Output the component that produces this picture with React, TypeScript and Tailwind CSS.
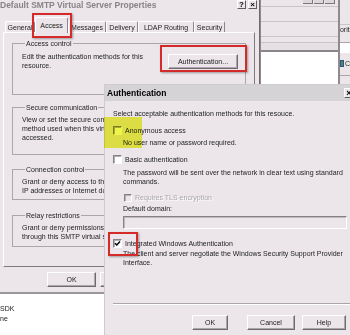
import React from 'react';

const Btn = ({ label, className = '' }: { label: string; className?: string }) => (
  <div
    className={`flex items-center justify-center h-[15px] border border-t-white border-l-white border-r-[#6f6b6f] border-b-[#6f6b6f] shadow-[inset_-1px_-1px_0_#aaa6aa] text-[7px] leading-none ${className}`}
  >
    {label}
  </div>
);

const TitleBtn = ({ children }: { children: React.ReactNode }) => (
  <div className="w-[9px] h-[9px] flex items-center justify-center border border-t-white border-l-white border-r-[#5f5b5f] border-b-[#5f5b5f] bg-[#ece6eb] text-[8px] font-bold leading-none text-black">
    {children}
  </div>
);

const Box = ({ checked = false, small = false, disabled = false }: { checked?: boolean; small?: boolean; disabled?: boolean }) => (
  <span
    className={`${small ? 'w-[8px] h-[8px]' : 'w-[9px] h-[9px]'} shrink-0 flex items-center justify-center border border-t-[#858185] border-l-[#858185] border-r-white border-b-white shadow-[inset_1px_1px_0_#b3afb3] ${disabled ? 'bg-[#ece6eb]' : 'bg-white'}`}
  >
    {checked && (
      <svg viewBox="0 0 7 7" className="w-[7px] h-[7px]">
        <path d="M1 3.2 L2.8 5 L6 1.5" stroke="#000" strokeWidth="1.5" fill="none" />
      </svg>
    )}
  </span>
);

const Group = ({ label, className = '', children }: { label: string; className?: string; children: React.ReactNode }) => (
  <fieldset className={`border border-[#aaa6aa] pl-[9px] ${className}`}>
    <legend className="ml-[3px] px-[1px] text-[7px] leading-[9px]">{label}</legend>
    {children}
  </fieldset>
);

const tabs = [
  { name: 'General', w: 'w-[30px]' },
  { name: 'Access', w: 'w-[33px]', active: true },
  { name: 'Messages', w: 'w-[38px]' },
  { name: 'Delivery', w: 'w-[32px]' },
  { name: 'LDAP Routing', w: 'w-[56px]' },
  { name: 'Security', w: 'w-[31px]' },
];

function SmtpDialog() {
  return (
    <div className="absolute left-[-3px] top-0 w-[263px] h-[294px] flex flex-col bg-[#ece6eb] border-r border-b-2 border-r-[#6d696d] border-b-[#9a969a]">
      <div className="h-[15px] flex items-start justify-between pl-[3px] pr-[2px]">
        <span className="text-[8.5px] leading-[10px] font-bold text-[#878387] whitespace-nowrap">
          Default SMTP Virtual Server Properties
        </span>
        <div className="flex gap-[2px]">
          <TitleBtn>?</TitleBtn>
          <TitleBtn>×</TitleBtn>
        </div>
      </div>

      <div className="mt-[2px] ml-[6px] pl-[2px] h-[16px] flex items-end">
        {tabs.map(t => (
          <div
            key={t.name}
            className={`${t.w} flex items-center justify-center text-[7px] leading-none whitespace-nowrap border-t border-l border-t-white border-l-white border-r border-r-[#8a868a] rounded-t-[2px] ${
              t.active ? 'relative z-10 h-[16px] bg-[#ece6eb]' : 'h-[12px]'
            }`}
          >
            {t.name}
          </div>
        ))}
      </div>

      <div className="ml-[6px] -mt-[1px] w-[252px] h-[235px] flex flex-col pt-[6px] pl-[8px] border border-t-white border-l-white border-r-[#7d797d] border-b-[#7d797d]">
        <Group label="Access control" className="w-[234px] h-[56px]">
          <div className="flex justify-between pr-[7px] pt-[4px]">
            <div className="text-[7px] leading-[9px] whitespace-nowrap">
              <div>Edit the authentication methods for this</div>
              <div>resource.</div>
            </div>
            <Btn label="Authentication..." className="w-[70px] mt-[2px]" />
          </div>
        </Group>
        <Group label="Secure communication" className="w-[234px] h-[52px] mt-[8px]">
          <div className="pt-[3px] text-[7px] leading-[9px] whitespace-nowrap">
            <div>View or set the secure communications</div>
            <div>method used when this virtual server is</div>
            <div>accessed.</div>
          </div>
        </Group>
        <Group label="Connection control" className="w-[234px] h-[35px] mt-[10px]">
          <div className="pt-[3px] text-[7px] leading-[9px] whitespace-nowrap">
            <div>Grant or deny access to this resource using</div>
            <div>IP addresses or Internet domain names.</div>
          </div>
        </Group>
        <Group label="Relay restrictions" className="w-[234px] h-[36px] mt-[11px]">
          <div className="pt-[3px] text-[7px] leading-[9px] whitespace-nowrap">
            <div>Grant or deny permissions to relay e-mail</div>
            <div>through this SMTP virtual server.</div>
          </div>
        </Group>
      </div>

      <div className="ml-[6px] mt-[5px] w-[252px] flex justify-end gap-[4px]">
        <Btn label="OK" className="w-[49px]" />
        <Btn label="Cancel" className="w-[49px]" />
        <Btn label="Apply" className="w-[49px]" />
        <Btn label="Help" className="w-[49px]" />
      </div>
    </div>
  );
}

function BackWindow() {
  return (
    <div className="absolute left-[260px] top-0 w-[90px] h-[84px] flex bg-[#ece6eb] border-l border-l-[#8e8a8e]">
      <div className="w-[77px] flex flex-col">
        <div className="h-[7px] flex justify-end gap-[1px] pr-[3px] border-b border-b-[#c8c4c8]">
          <div className="w-[10px] h-[4px] border-r border-b border-[#7a767a] bg-[#dcd8dc]" />
          <div className="w-[10px] h-[4px] border-r border-b border-[#7a767a] bg-[#dcd8dc]" />
          <div className="w-[10px] h-[4px] border-r border-b border-[#7a767a] bg-[#dcd8dc]" />
        </div>
        <div className="h-[15px] border-b border-b-[#c8c4c8]" />
        <div className="h-[15px] border-b border-b-[#c8c4c8]" />
        <div className="h-[5px]" />
        <div className="h-[10px] border-t border-t-[#c8c4c8] border-b-2 border-b-[#8a868a] bg-[#e6e0e5]" />
        <div className="flex-1 bg-white" />
      </div>
      <div className="flex-1 flex flex-col border-l-2 border-l-[#8e8a8e]">
        <div className="h-[25px] border-b border-b-[#c8c4c8]" />
        <div className="text-[7px] leading-[9px] whitespace-nowrap">orit</div>
        <div className="mt-[8px] h-[11px] bg-white border-t border-t-[#a9a5a9]" />
        <div className="mt-[6px] h-[9px] flex items-center gap-[1px]">
          <span className="w-[4px] h-[7px] bg-[#4f8a5c] border border-[#2d4f8a]" />
          <span className="text-[7px] leading-none">C</span>
        </div>
        <div className="mt-[7px] border-b border-b-[#a9a5a9]" />
      </div>
    </div>
  );
}

function ListArea() {
  return (
    <div className="absolute left-0 top-[294px] w-[120px] h-[41px] bg-white pt-[10px] text-[7px] leading-[10px] whitespace-nowrap">
      <div>SDK</div>
      <div>ne</div>
    </div>
  );
}

function AuthDialog() {
  return (
    <div className="absolute left-[104px] top-[84px] w-[252px] h-[260px] flex flex-col bg-[#ece6eb] border-l border-t border-l-[#cfcbcf] border-t-[#cfcbcf]">
      <div className="h-[16px] shrink-0 flex items-center justify-between pl-[2px] pr-[2px] bg-[#d6d3d6]">
        <span className="text-[8.5px] font-bold leading-none text-black">Authentication</span>
        <div className="w-[10px] h-[10px] flex items-center justify-center border border-t-white border-l-white border-r-[#5f5b5f] border-b-[#5f5b5f] bg-[#ece6eb] text-[9px] font-bold leading-none text-black">
          ×
        </div>
      </div>

      <div className="flex flex-col pl-[8px] text-[7px] leading-[9px] whitespace-nowrap">
        <div className="mt-[8px]">Select acceptable authentication methods for this resouce.</div>

        <div className="mt-[8px] h-[9px] flex items-center gap-[3px]">
          <Box />
          <span>Anonymous access</span>
        </div>
        <div className="mt-[3px] ml-[10px]">No user name or password required.</div>

        <div className="mt-[8px] h-[9px] flex items-center gap-[3px]">
          <Box />
          <span>Basic authentication</span>
        </div>
        <div className="mt-[4px] ml-[10px]">
          <div>The password will be sent over the network in clear text using standard</div>
          <div>commands.</div>
        </div>

        <div className="mt-[7px] ml-[11px] h-[9px] flex items-center gap-[3px]">
          <Box small disabled />
          <span className="text-[#a9a5a9] [text-shadow:1px_1px_0_#fff]">Requires TLS encryption</span>
        </div>
        <div className="mt-[2px] ml-[10px]">Default domain:</div>
        <div className="mt-[3px] ml-[10px] w-[224px] h-[13px] border border-t-[#858185] border-l-[#858185] border-r-white border-b-white shadow-[inset_1px_1px_0_#bdb9bd]" />

        <div className="mt-[10px] h-[9px] flex items-center gap-[3px]">
          <Box checked />
          <span>Integrated Windows Authentication</span>
        </div>
        <div className="mt-[1px] ml-[10px]">
          <div>The client and server negotiate the Windows Security Support Provider</div>
          <div>Interface.</div>
        </div>

        <div className="mt-[36px] h-[2px] border-t border-t-[#a9a5a9] border-b border-b-white" />

        <div className="mt-[10px] flex">
          <Btn label="OK" className="ml-[79px] w-[36px] shadow-[0_0_0_1px_#3f3b3f]" />
          <Btn label="Cancel" className="ml-[19px] w-[48px]" />
          <Btn label="Help" className="ml-[7px] w-[44px]" />
        </div>
      </div>
    </div>
  );
}

export default function App() {
  return (
    <div className="relative w-[350px] h-[335px] overflow-hidden bg-[#ece6eb] font-['Liberation_Sans',Arial,sans-serif] text-[#1c1c1c]">
      <BackWindow />
      <ListArea />
      <SmtpDialog />
      <AuthDialog />

      {/* highlight + red annotation boxes */}
      <div className="absolute left-[104px] top-[117px] w-[38px] h-[31px] bg-[#eef54a] mix-blend-multiply" />
      <div className="absolute left-[32px] top-[13px] w-[40px] h-[25px] border-2 border-[#d42a2a] shadow-[1px_1px_2px_rgba(0,0,0,0.35)]" />
      <div className="absolute left-[160px] top-[45px] w-[87px] h-[27px] border-2 border-[#d42a2a] shadow-[1px_1px_2px_rgba(0,0,0,0.35)]" />
      <div className="absolute left-[108px] top-[232px] w-[30px] h-[24px] border-2 border-[#d42a2a] shadow-[1px_1px_2px_rgba(0,0,0,0.35)]" />
    </div>
  );
}
